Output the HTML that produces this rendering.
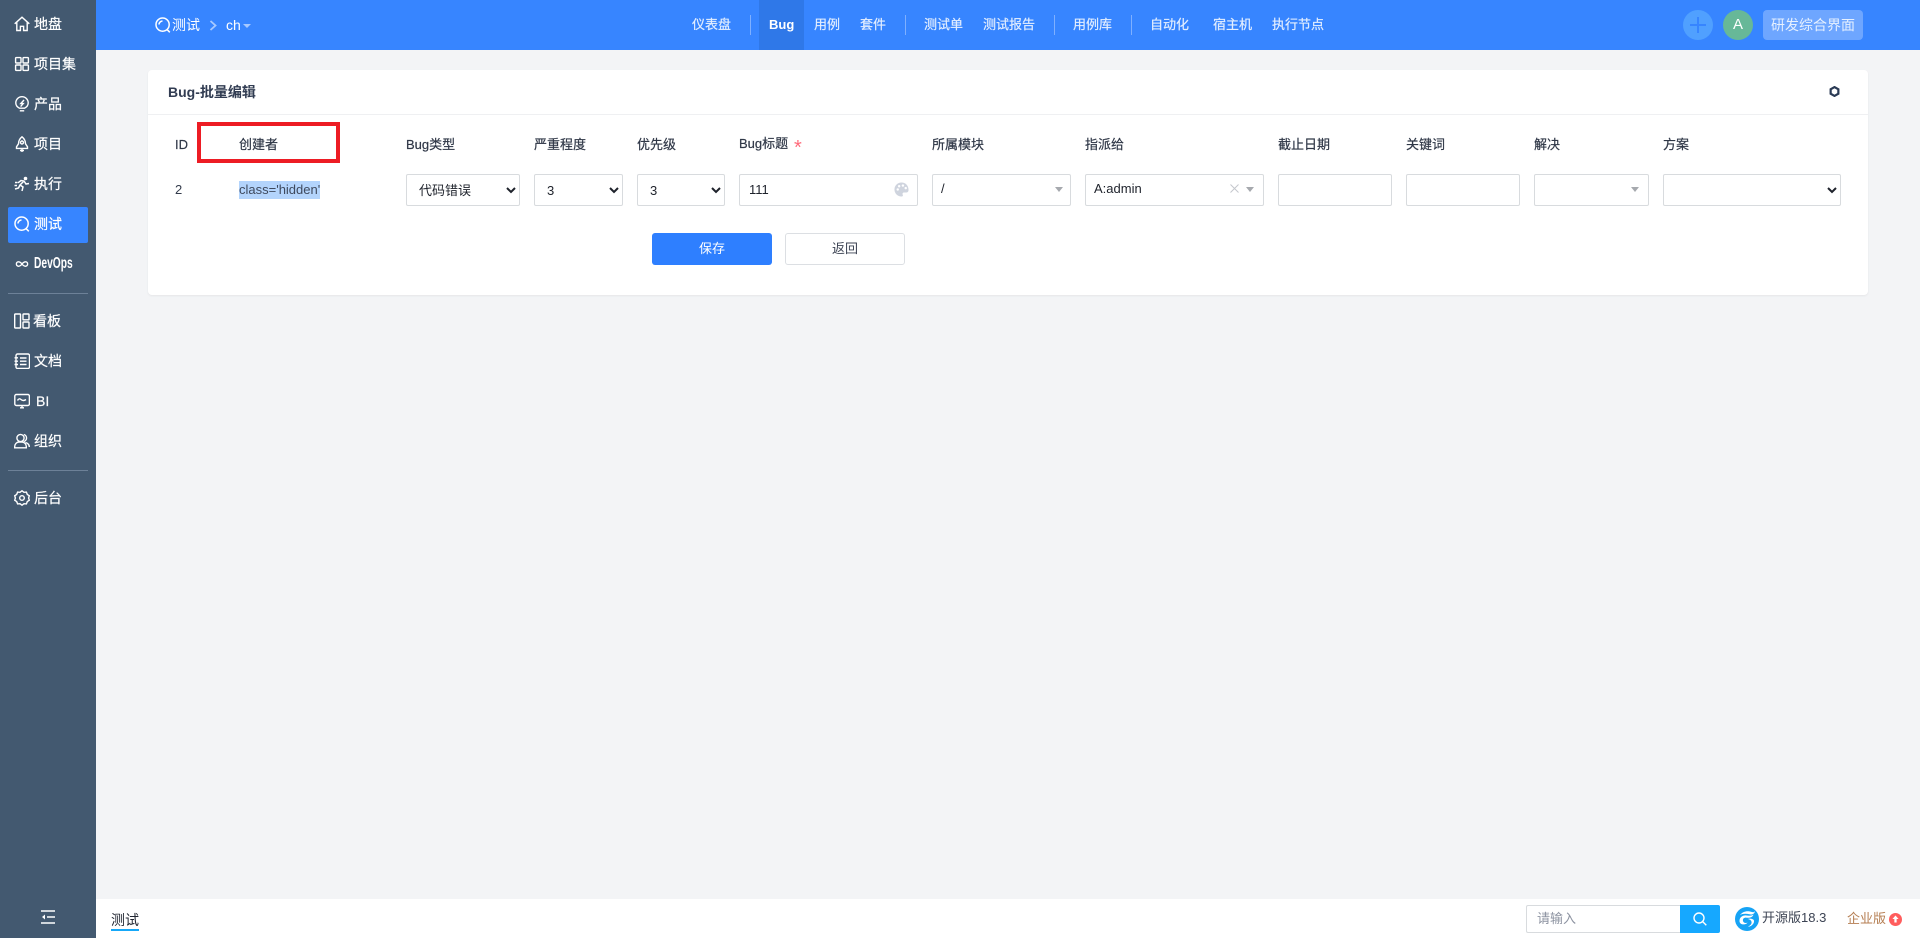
<!DOCTYPE html>
<html lang="zh"><head><meta charset="utf-8"><title>Bug-批量编辑</title>
<style>
*{box-sizing:border-box}
html,body{margin:0;padding:0;width:1920px;height:938px;overflow:hidden;background:#f3f4f6;font:13px/20px "Liberation Sans","Noto Sans CJK SC",sans-serif;color:#3c4353}
.a,.t,svg{position:absolute}
.t{white-space:nowrap;height:20px;line-height:20px}
#side{position:absolute;left:0;top:0;width:96px;height:938px;background:#435970}
#side .t{color:#fff;font-size:14px;left:34px;-webkit-text-stroke:.2px #fff}
#side svg{left:14px;width:16px;height:16px;fill:none;stroke:#fff;stroke-width:1.4}
#top{position:absolute;left:96px;top:0;width:1824px;height:50px;background:#3785ff}
.n{color:#e3eeff;font-size:13px;top:15px;-webkit-text-stroke:.2px #e3eeff}
.sep{position:absolute;top:15px;width:1.5px;height:20px;background:#7fb0ff}
.l{font-size:13px;color:#2f3747;top:135px;-webkit-text-stroke:.2px #2f3747}
.f{position:absolute;top:174px;height:32px;border:1px solid #d8dbde;border-radius:2px;background:#fff}
select{position:absolute;top:174px;height:32px;border:1px solid #d8dbde;border-radius:2px;background:#fff;color:#1e222b;font:13px "Liberation Sans","Noto Sans CJK SC",sans-serif;padding:0 8px;margin:0}
.c{position:absolute;width:0;height:0;border-left:4.5px solid transparent;border-right:4.5px solid transparent;border-top:5px solid #a6a9ae}
</style></head><body>

<div id="side">
<div class="a" style="left:8px;top:207px;width:80px;height:36px;background:#3785ff;border-radius:2px"></div>
<svg style="top:16px" viewBox="0 0 16 16"><path d="M.7 7.8 8 1.2l7.3 6.6M2.8 6.4v8.1h3.6v-4.2h3.2v4.2h3.6V6.4"/></svg><span class="t" style="top:14px">地盘</span>
<svg style="top:56px" viewBox="0 0 16 16"><rect x="1.6" y="1.6" width="5.4" height="5.4" rx=".8"/><rect x="9" y="1.6" width="5.4" height="5.4" rx=".8"/><rect x="1.6" y="9" width="5.4" height="5.4" rx=".8"/><rect x="9" y="9" width="5.4" height="5.4" rx=".8"/></svg><span class="t" style="top:54px">项目集</span>
<svg style="top:96px" viewBox="0 0 16 16"><path d="M5.5 12.2C3.4 11.2 1.8 9.2 1.8 6.9a6.2 6.2 0 0 1 12.4 0c0 2.3-1.6 4.3-3.7 5.3H5.5zM5.8 14.8h4.4"/><path d="M10 4 6.8 7.6h2.4L6.6 10.6" stroke-width="1.4"/></svg><span class="t" style="top:94px">产品</span>
<svg style="top:136px" viewBox="0 0 16 16"><path d="M8 .8c2.5 2 3.5 4.3 3.5 7l2 3v1.600H2.500V10.800l2-3c0-2.700 1-5 3.500-7z"/><circle cx="8" cy="6.500" r="1.500"/><path d="M6 14.500h4M8 13v3" stroke-width="1.400"/></svg><span class="t" style="top:134px">项目</span>
<svg style="top:176px" viewBox="0 0 16 16"><circle cx="11.500" cy="2.500" r="1.800" fill="#fff" stroke="none"/><path d="M4 6.800 7 4.500 10 5 12 8l3-.5M10 5 6 9l3 2-1 4M6 9l-1.500 3L1 13M1 6.500h2.500M.5 9.500H3" stroke-width="1.500"/></svg><span class="t" style="top:174px">执行</span>
<svg style="top:216px" viewBox="0 0 16 16"><circle cx="7.600" cy="7.600" r="6.600" stroke-width="1.500"/><path d="M11.800 12.300 14.800 15.300M4 7.500A3.600 3.600 0 0 1 7.500 4" stroke-width="1.500"/></svg><span class="t" style="top:214px;color:#fff">测试</span>
<svg style="top:256px" viewBox="0 0 16 16"><path d="M8 8C6.800 6.300 5.600 5.800 4.200 5.800a2.300 2.300 0 0 0 0 4.500C5.600 10.300 6.800 9.700 8 8s2.400-2.200 3.800-2.200a2.300 2.300 0 0 1 0 4.500C10.400 10.300 9.200 9.700 8 8z" stroke-width="1.300"/></svg><span class="t" style="top:254px;font-weight:700;font-size:16px;transform:scaleX(.64);transform-origin:0 50%;-webkit-text-stroke:0">DevOps</span>
<div class="a" style="left:8px;top:293px;width:80px;height:1px;background:#6d8198"></div>
<svg style="top:313px" viewBox="0 0 16 16"><rect x=".7" y="1" width="5.800" height="14" rx=".6"/><rect x="9" y="1" width="6" height="5.800" rx=".6"/><rect x="9" y="9" width="6" height="6" rx=".6"/></svg><span class="t" style="top:311px;left:33px">看板</span>
<svg style="top:353px" viewBox="0 0 16 16"><rect x="2" y="1" width="13.500" height="14.500" rx="1.500"/><path d="M6 5h6.500M6 8.200h6.500M6 11.500h6.500M.5 4.800H4M.5 8.200H4M.5 11.500H4"/></svg><span class="t" style="top:351px">文档</span>
<svg style="top:393px" viewBox="0 0 16 16"><rect x=".8" y="1.500" width="14.600" height="11" rx="1.500"/><path d="M3.500 7.500c1-2 2.400-2 3.500-1s2.500 1.800 5 0M6 14.800h4M8 12.500v2.300"/></svg><span class="t" style="top:391px;left:36px">BI</span>
<svg style="top:433px" viewBox="0 0 16 16"><circle cx="6.500" cy="5" r="3.600"/><path d="M.7 14.800v-1.300c0-2.500 2-4.200 4-4.500h3.600c2 .3 4 2 4 4.500v1.300zM9.800 1.500a3.600 3.600 0 0 1 0 7M11.500 9.500c2 .6 3.800 2 3.800 4.500"/></svg><span class="t" style="top:431px">组织</span>
<div class="a" style="left:8px;top:470px;width:80px;height:1px;background:#6d8198"></div>
<svg style="top:490px" viewBox="0 0 16 16"><path d="M8 .8l2 1.500 2.400-.2.900 2.300 2 1.400-.7 2.200.7 2.200-2 1.400-.9 2.300-2.400-.2-2 1.500-2-1.500-2.400.2-.9-2.300-2-1.400.7-2.200L.7 5.800l2-1.400.9-2.300 2.400.2z"/><circle cx="8" cy="8" r="2.300"/></svg><span class="t" style="top:488px">后台</span>
<svg style="left:41px;top:910px;width:14px;height:14px;stroke-width:1.600" viewBox="0 0 14 14"><path d="M0 1h14M6 7h8M0 13h14"/><path d="M4 4.500 1 7l3 2.500z" fill="#fff" stroke="none"/></svg>
</div>

<div id="top"></div>
<svg style="left:155px;top:17px;width:16px;height:16px;fill:none;stroke:#fff;stroke-width:1.500" viewBox="0 0 16 16"><circle cx="7.600" cy="7.600" r="6.600"/><path d="M11.800 12.300 14.800 15.300M4 7.500A3.600 3.600 0 0 1 7.500 4"/></svg>
<span class="t" style="left:172px;top:15px;color:#fff;font-size:14px">测试</span>
<svg style="left:209px;top:20px;width:9px;height:11px;fill:none;stroke:#a7c9ff;stroke-width:1.800" viewBox="0 0 9 11"><path d="M1.500 1 6.500 5.500 1.500 10"/></svg>
<span class="t" style="left:226px;top:15px;color:#fff;font-size:14px">ch</span>
<div class="c" style="left:243px;top:24px;border-top-color:#a7c9ff;border-left-width:4px;border-right-width:4px;border-top-width:4px"></div>

<span class="t n" style="left:692px">仪表盘</span>
<div class="sep" style="left:749.500px"></div>
<div class="a" style="left:759px;top:0;width:45px;height:50px;background:#2f78e8"></div>
<span class="t n" style="left:769px;color:#fff;font-weight:700;-webkit-text-stroke:0">Bug</span>
<span class="t n" style="left:814px">用例</span>
<span class="t n" style="left:860px">套件</span>
<div class="sep" style="left:904.500px"></div>
<span class="t n" style="left:924px">测试单</span>
<span class="t n" style="left:983px">测试报告</span>
<div class="sep" style="left:1053.500px"></div>
<span class="t n" style="left:1073px">用例库</span>
<div class="sep" style="left:1130.500px"></div>
<span class="t n" style="left:1150px">自动化</span>
<span class="t n" style="left:1213px">宿主机</span>
<span class="t n" style="left:1272px">执行节点</span>

<div class="a" style="left:1683px;top:10px;width:30px;height:30px;border-radius:50%;background:#50a0ff"></div>
<div class="a" style="left:1690px;top:24px;width:16px;height:2px;background:#3785ff"></div>
<div class="a" style="left:1697px;top:17px;width:2px;height:16px;background:#3785ff"></div>
<div class="a" style="left:1723px;top:10px;width:30px;height:30px;border-radius:50%;background:#67b898;color:#fff;font-size:15px;line-height:30px;text-align:center">A</div>
<div class="a" style="left:1763px;top:10px;width:100px;height:30px;border-radius:4px;background:#6ea6ff;color:#e6f0ff;font-size:14px;line-height:30px;text-align:center">研发综合界面</div>

<div class="a" style="left:148px;top:70px;width:1720px;height:225px;background:#fff;border-radius:4px;box-shadow:0 1px 2px rgba(0,0,0,.06)"></div>
<div class="a" style="left:148px;top:114px;width:1720px;height:1px;background:#eff0f2"></div>
<span class="t" style="left:168px;top:82px;font-weight:700;font-size:14px;color:#313c52">Bug-批量编辑</span>
<svg style="left:1829px;top:86px;width:11px;height:11px;fill:none;stroke:#2a3a55;stroke-width:2.400" viewBox="0 0 12 12"><path d="M6 1.200l4.200 2.400v4.800L6 10.800 1.800 8.400V3.600z"/></svg>

<span class="t l" style="left:175px">ID</span>
<span class="t l" style="left:239px">创建者</span>
<div class="a" style="left:197px;top:122px;width:143px;height:41px;border:4px solid #ed1c24"></div>
<span class="t l" style="left:406px">Bug类型</span>
<span class="t l" style="left:534px">严重程度</span>
<span class="t l" style="left:637px">优先级</span>
<span class="t l" style="left:739px;top:134px">Bug标题</span>
<span class="t" style="left:794px;top:138px;color:#ff6b7b;font-size:20px">*</span>
<span class="t l" style="left:932px">所属模块</span>
<span class="t l" style="left:1085px">指派给</span>
<span class="t l" style="left:1278px">截止日期</span>
<span class="t l" style="left:1406px">关键词</span>
<span class="t l" style="left:1534px">解决</span>
<span class="t l" style="left:1663px">方案</span>

<span class="t" style="left:175px;top:180px;color:#333b4b">2</span>
<div class="a" style="left:239px;top:181px;width:81px;height:18px;background:#b3d4fc"></div>
<span class="t" style="left:239px;top:180px;color:#3f4a5e">class='hidden'</span>

<select style="left:406px;width:114px"><option>代码错误</option></select>
<select style="left:534px;width:89px"><option>3</option></select>
<select style="left:637px;width:88px"><option>3</option></select>
<div class="f" style="left:739px;width:179px"></div>
<span class="t" style="left:749px;top:180px;color:#1e222b">111</span>
<svg style="left:894px;top:182px;width:15px;height:15px" viewBox="0 0 16 16"><path d="M8 .5a7.500 7.500 0 0 0 0 15c1.500 0 1.800-1 1.300-2-.6-1.200.2-2.300 1.500-2.300h2.200c1.500 0 2.500-1 2.500-2.700C15.500 3.500 12.200.5 8 .5z" fill="#cfd4de"/><circle cx="4" cy="8" r="1.300" fill="#fff"/><circle cx="5.500" cy="4.500" r="1.300" fill="#fff"/><circle cx="9.500" cy="3.800" r="1.300" fill="#fff"/><circle cx="12.500" cy="6.500" r="1.300" fill="#fff"/></svg>
<div class="f" style="left:932px;width:139px"></div>
<span class="t" style="left:941px;top:179px;color:#1e222b">/</span>
<div class="c" style="left:1055px;top:187px"></div>
<div class="f" style="left:1085px;width:179px"></div>
<span class="t" style="left:1094px;top:179px;color:#1e222b">A:admin</span>
<svg style="left:1230px;top:184px;width:9px;height:9px;stroke:#c4c7cc;stroke-width:1" viewBox="0 0 9 9"><path d="M.5.500l8 8M8.500.500l-8 8"/></svg>
<div class="c" style="left:1246px;top:187px"></div>
<div class="f" style="left:1278px;width:114px"></div>
<div class="f" style="left:1406px;width:114px"></div>
<div class="f" style="left:1534px;width:115px"></div>
<div class="c" style="left:1631px;top:187px"></div>
<select style="left:1663px;width:178px"><option></option></select>

<div class="a" style="left:652px;top:233px;width:120px;height:32px;background:#2e7fff;border-radius:3px;color:#fff;text-align:center;line-height:32px">保存</div>
<div class="a" style="left:785px;top:233px;width:120px;height:32px;background:#fff;border:1px solid #dcdfe3;border-radius:3px;color:#3c4353;text-align:center;line-height:30px">返回</div>

<div class="a" style="left:96px;top:899px;width:1824px;height:39px;background:#fff"></div>
<span class="t" style="left:111px;top:910px;color:#202531;font-size:14px">测试</span>
<div class="a" style="left:111px;top:929px;width:28px;height:2px;background:#16a8f8"></div>
<div class="a" style="left:1526px;top:905px;width:155px;height:28px;border:1px solid #d8dbde;border-right:0;border-radius:2px 0 0 2px;background:#fff"></div>
<span class="t" style="left:1537px;top:909px;color:#8d93a1">请输入</span>
<div class="a" style="left:1680px;top:905px;width:40px;height:28px;background:#16a8ff;border-radius:0 2px 2px 0"></div>
<svg style="left:1693px;top:912px;width:14px;height:14px;fill:none;stroke:#fff;stroke-width:1.400" viewBox="0 0 14 14"><circle cx="6" cy="6" r="5"/><path d="M9.800 9.800 13.300 13.300"/></svg>
<svg style="left:1735px;top:907px;width:24px;height:24px" viewBox="0 0 24 24"><circle cx="12" cy="12" r="12" fill="#16a3f5"/><path d="M5 8c3-4 8-4.500 12-3 1.500.6 2.500 0 3-1-.3 3-3 4-5.500 3.300C11 6.500 8 6.500 5 8z" fill="#fff"/><path d="M4.500 14c0-4 3.500-6 7-5.500 2.500.4 5 .4 7-1-1 3-4 3.500-7 3.200-2.500-.2-4 1.200-3.500 3.300.5 2 3 2.500 4.500 1.500-1 2.500-8 3-8-1.500z" fill="#fff"/><path d="M12.500 12c2.500-.8 5.500-.5 6.500 1.500.5 3-2.500 6-6 6.300 2.500-1.500 4-3 3.500-5-.3-1.500-2-2.600-4-2.800z" fill="#fff"/></svg>
<span class="t" style="left:1762px;top:908px;color:#3c4353;font-size:13px">开源版18.3</span>
<span class="t" style="left:1847px;top:909px;color:#b57e52;font-size:13px">企业版</span>
<div class="a" style="left:1889px;top:913px;width:13px;height:13px;border-radius:50%;background:#ff5d5d"></div>
<svg style="left:1892px;top:915px;width:7px;height:8px;fill:#fff" viewBox="0 0 8 8"><path d="M4 0 7.500 4H5.300v4H2.700V4H.5z"/></svg>
</body></html>
